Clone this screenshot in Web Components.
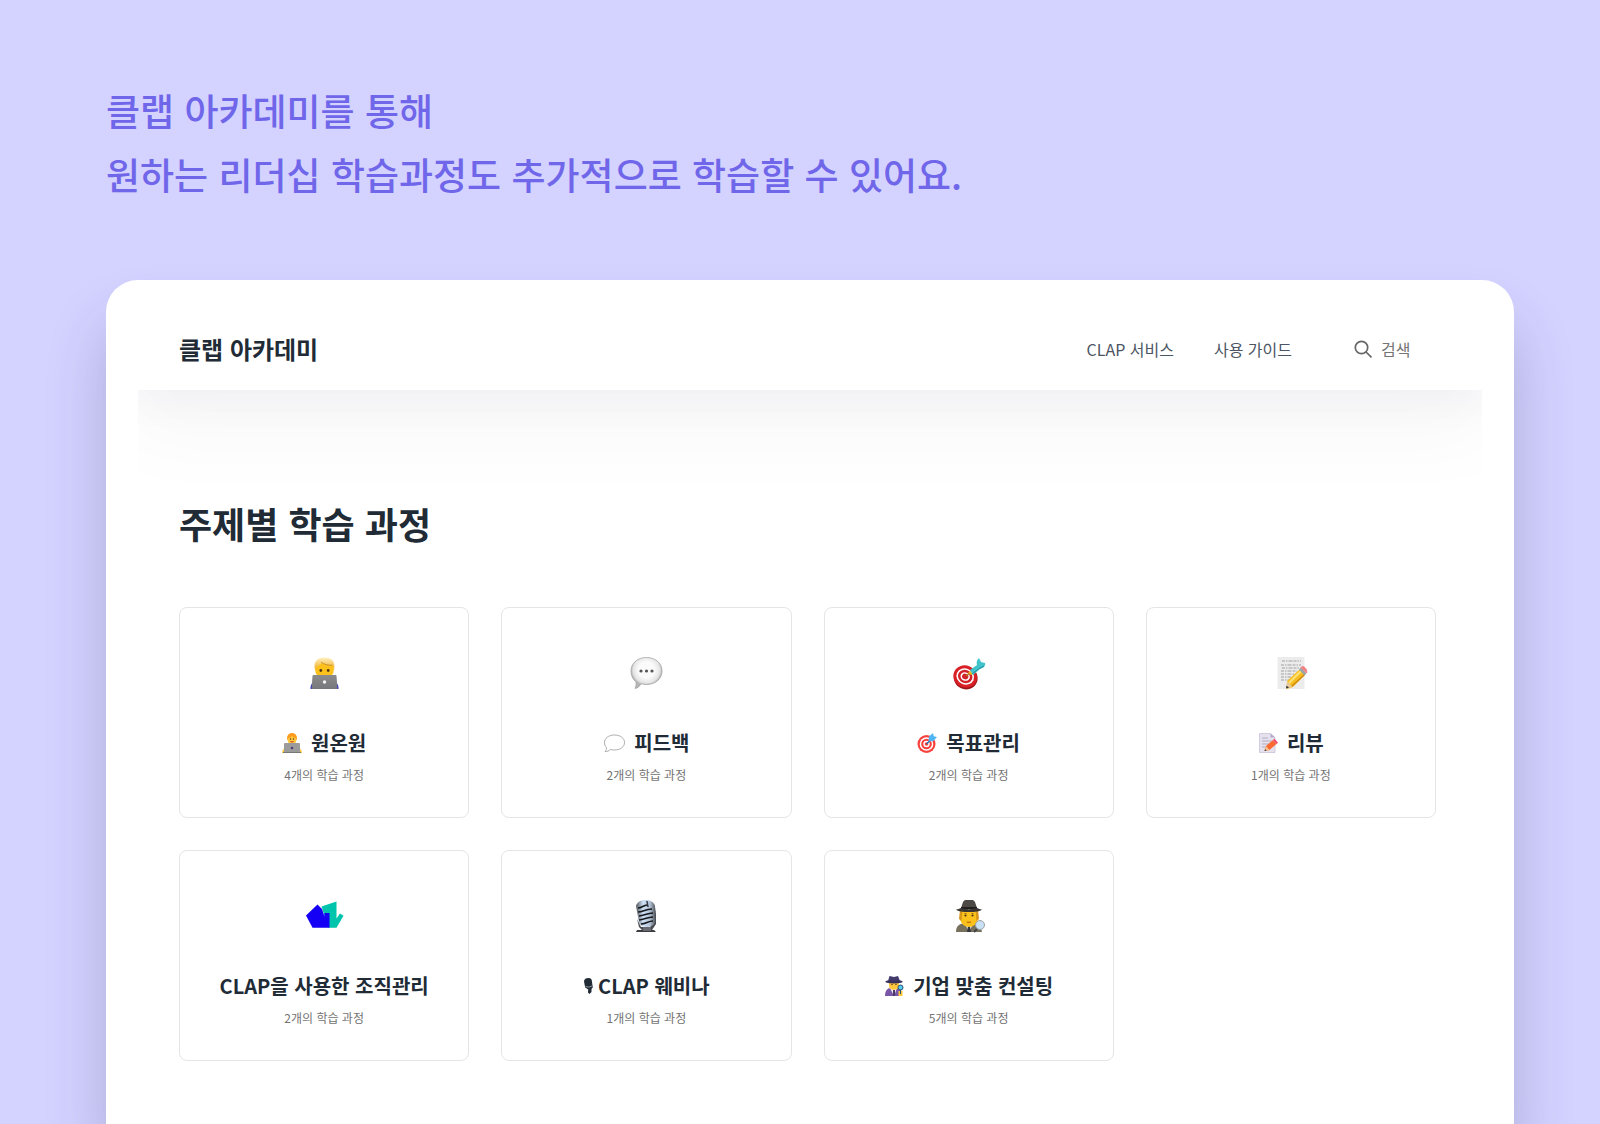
<!DOCTYPE html>
<html lang="ko">
<head>
<meta charset="UTF-8">
<meta name="viewport" content="width=device-width, initial-scale=1">
<title>클랩 아카데미</title>
<style>
    body {
        margin: 0;
        background-color: #d4d2ff;
        color: #212b36;
        font-family: "Noto Sans CJK KR", "Noto Sans", sans-serif;
    }
</style>
</head>
<body>
<promo-page>
    <span slot="line1">클랩 아카데미를 통해</span>
    <span slot="line2">원하는 리더십 학습과정도 추가적으로 학습할 수 있어요.</span>
    <academy-header>클랩 아카데미</academy-header>
    <topic-list>
        <span slot="heading">주제별 학습 과정</span>
        <topic-card icon="coder" emoji="coder-small" count="4">원온원</topic-card>
        <topic-card icon="bubble" emoji="bubble-small" count="2">피드백</topic-card>
        <topic-card icon="target" emoji="target-small" count="2">목표관리</topic-card>
        <topic-card icon="memo" emoji="memo-small" count="1">리뷰</topic-card>
        <topic-card icon="clap" count="2">CLAP을 사용한 조직관리</topic-card>
        <topic-card icon="mic" emoji="mic-small" count="1">CLAP 웨비나</topic-card>
        <topic-card icon="detective" emoji="detective-small" count="5">기업 맞춤 컨설팅</topic-card>
    </topic-list>
</promo-page>

<script>
// Icon drawings, keyed by name. Big ones use a 34 box, the small ones a 20 box.
const ICONS = {
    'coder': { box: '0 0 34 34', body: `
        <defs>
            <linearGradient id="hair" x2="0" y2="1"><stop stop-color="#fff0c0"/><stop offset="1" stop-color="#f0ac24"/></linearGradient>
            <linearGradient id="lap" x2="0" y2="1"><stop stop-color="#8b8b8d"/><stop offset="1" stop-color="#77787b"/></linearGradient>
        </defs>
        <path d="M3.500 33c0-4 1-6 4-7h20c3 1 4 3 4 7z" fill="#2b2fc4"/>
        <ellipse cx="17.500" cy="13" rx="9.500" ry="10.500" fill="#fcc21b"/>
        <path d="M8 14C6 6 10 1.500 17.500 1.500S29 6 27 14c-.6-2-.8-3-1.500-4.500-5 .5-8-.5-11-2.500-1 2.500-5 2.500-6.500 7z" fill="url(#hair)"/>
        <path d="M14 6c3 2.500 7 3.500 11.500 3.200" fill="none" stroke="#b97809" stroke-width=".7"/>
        <circle cx="13.800" cy="14.500" r="1.400" fill="#553711"/><circle cx="21.200" cy="14.500" r="1.400" fill="#553711"/>
        <path d="M6.500 19h22a1 1 0 0 1 1 1l1 13h-26l1-13a1 1 0 0 1 1-1z" fill="url(#lap)"/>
        <circle cx="17.500" cy="26" r="1.700" fill="#f4f4f4"/>` },
    'bubble': { box: '0 0 34 34', body: `
        <defs><radialGradient id="bub" cy=".4"><stop offset=".5" stop-color="#fbfbfb"/><stop offset=".85" stop-color="#e5e5e5"/><stop offset="1" stop-color="#b5b5b5"/></radialGradient></defs>
        <path d="M17.500 1.500c9 0 15.500 5.700 15.500 13.500s-6.500 13.500-15.500 13.500c-2 0-3.500-.2-5-.7-2 2.500-4 4.300-6.500 4.700 1-2 1.500-4.500.8-6.800C3.800 23.300 2 19.500 2 15 2 7.200 8.500 1.500 17.500 1.500z" fill="url(#bub)" stroke="#9c9c9c" stroke-width=".7"/>
        <circle cx="12" cy="15" r="1.600" fill="#555"/><circle cx="17.500" cy="15" r="1.600" fill="#555"/><circle cx="23" cy="15" r="1.600" fill="#555"/>` },
    'target': { box: '0 0 34 34', body: `
        <g transform="rotate(24 13 21)">
            <ellipse cx="14" cy="21.500" rx="12" ry="11.500" fill="#9c1519"/>
            <ellipse cx="13" cy="20.500" rx="12" ry="11" fill="#d92027"/>
            <ellipse cx="13" cy="20.500" rx="9" ry="8" fill="#fff"/>
            <ellipse cx="13" cy="20.500" rx="7.400" ry="6.500" fill="#d3232a"/>
            <ellipse cx="13" cy="20.500" rx="4.800" ry="4.200" fill="#fff"/>
            <ellipse cx="13" cy="20.500" rx="3.200" ry="2.800" fill="#d3232a"/>
        </g>
        <path d="M14 20l5-4" stroke="#a87a16" stroke-width="1.500"/>
        <path d="M16 17l2-2 3 3-2 1z" fill="#e9b320"/>
        <path d="M18 14l7-5c-1-3 0-5 2-7l2 4 4 1c1 2-1 5-5 6l-7 6z" fill="#42c3cc"/>
        <path d="M20 18l8-6 4-2" fill="none" stroke="#238f9b" stroke-width="1"/>` },
    'memo': { box: '0 0 34 34', body: `
        <path d="M3.500 1h27v32h-27z" fill="#ececec"/>
        <g stroke="#a0a0a0" stroke-width="1" stroke-dasharray="3 1 1.500 1 4 1">
            <path d="M8 5h19M7 9h20M8 12h17M7 15h16M7 18h13M7 21h10M7 24h9"/>
        </g>
        <path d="M13 25l13-12 5 6-12 12-6 2z" fill="#f8bf23"/>
        <path d="M15 27l13-13" stroke="#ffe27a" stroke-width="2"/>
        <path d="M17.500 30.500l13-12" stroke="#d08a12" stroke-width="1.500"/>
        <path d="M25 13.500l2-2 5.500 6-2 2z" fill="#9aa5aa"/>
        <path d="M27 11.500c2-3 7 2 5.500 5.500z" fill="#f08284" stroke="#f08284" stroke-width="1"/>
        <path d="M13 25l5.500 6L12 32.500z" fill="#e8c99a"/><path d="M12 32.500l.5-3 2.500 2.200z" fill="#333"/>` },
    'clap': { box: '0 0 40 34', body: `
        <path d="M17.500 7.500l15-5v17l3.500-5 3.500 2.200-7 12h-8z" fill="#00c4ac"/>
        <path d="M2 16.500l11.500-11L18 10l2.500 7.500V14h5v14.700h-17z" fill="#1500f5"/>` },
    'mic': { box: '0 0 34 34', body: `
        <defs><linearGradient id="chrome"><stop stop-color="#505359"/><stop offset=".35" stop-color="#cfe2f7"/><stop offset=".7" stop-color="#b3c2d6"/><stop offset="1" stop-color="#45484e"/></linearGradient></defs>
        <path d="M8 31h17l2 2H7z" fill="#3a3d42"/>
        <path d="M8 20l2 8 3 3h10l4-6V9l-2 14-4 5h-9z" fill="#494b50"/>
        <path d="M7 7c1-4 5-6 9-6 5 0 9 2 10 6l1 14c-1 4-3 6-8 7-5 0-8-1-9-5z" fill="url(#chrome)"/>
        <g fill="none" stroke="#17191c" stroke-width="1.600"><path d="M9 9c4 0 5-2.500 9-3M9 13c5 0 7-3 14-3M10 17c5 0 8-3 14-3M10 21c5 0 8-3 14-3M12 25c5 0 7-3 12-3"/></g>
        <path d="M18 2l1 6" stroke="#343a42" stroke-width="1.500"/>
        <path d="M14 28h8v4h-8z" fill="#686b72"/>` },
    'detective': { box: '0 0 34 34', body: `
        <path d="M4 33c0-6 3-8 8-9h11c4 1 6 4 7 9z" fill="#77705d"/>
        <path d="M13 25l4 8 4-8z" fill="#f5f5f5"/><path d="M16 27h2l1 6h-4z" fill="#34363d"/>
        <path d="M8 11h18v9c-1 5-5 8-9 8s-8-3-9-8z" fill="#fcc21b"/>
        <path d="M8 11h2.500L9.500 22 7 20zM26 11h-2.500l1 11 2.500-2z" fill="#d59619"/>
        <path d="M12.500 14.500h2M19.500 14.500h2" stroke="#8c5a0c" stroke-width=".8"/>
        <circle cx="13.500" cy="16.500" r="1.100" fill="#4e3213"/><circle cx="20.500" cy="16.500" r="1.100" fill="#4e3213"/>
        <path d="M15 23q2 .6 4 0" fill="none" stroke="#b2570f" stroke-width="1.100"/>
        <path d="M9 9l2-6c2-3 4-1.500 6-2 2 .5 4-1 6 2l2 6z" fill="#4b4845"/>
        <path d="M9 8h16v2H9z" fill="#211f1d"/>
        <path d="M4 10.500c3 0 4-1.500 5-1.500 5 1.500 11 1.500 16 0 1 0 2 1.500 5 1.500-2 2-7 2.500-13 2.500s-11-.5-13-2.500z" fill="#383532"/>
        <path d="M25 30l-3 3" stroke="#444" stroke-width="2"/>
        <circle cx="28" cy="26" r="4.500" fill="#c8e1f5" stroke="#9ca2a7" stroke-width="1"/>` },
    'coder-small': { box: '0 0 20 20', body: `
        <path d="M0 20c0-3 2-5 4-5h12c2 0 4 2 4 5z" fill="#ffc83d"/>
        <circle cx="10" cy="5" r="5" fill="#ff9a1f"/>
        <path d="M6 5c2 0 3-1 4-2 1 1 2 2 4 2v3c0 5-8 5-8 0z" fill="#ffc83d"/>
        <circle cx="8.500" cy="6" r=".7" fill="#5c3318"/><circle cx="11.500" cy="6" r=".7" fill="#5c3318"/>
        <path d="M8.500 8.500q1.500 1 3 0" fill="none" stroke="#d42b2b" stroke-width="1"/>
        <rect x="2" y="10" width="16" height="9.500" rx="1" fill="#9b9b9b"/>
        <path d="M1 19h18v1H1z" fill="#777"/>
        <circle cx="10" cy="15" r="1.300" fill="#553c78"/>` },
    'bubble-small': { box: '0 0 22 20', body: `
        <path d="M11.500 2c6 0 10 3.300 10 7.500S17.500 17 11.500 17c-1.500 0-3-.2-4-.6C6 18 4 18.700 2 18.500c1-1 1.700-2.200 1.500-3.700-1.300-1.400-2-3.200-2-5.300C1.500 5.300 5.500 2 11.500 2z" fill="#fff" stroke="#a3a3a3" stroke-width=".9"/>` },
    'target-small': { box: '0 0 20 20', body: `
        <circle cx="9.500" cy="11" r="9" fill="#f8403c"/><circle cx="9.500" cy="11" r="6.800" fill="#fff"/>
        <circle cx="9.500" cy="11" r="5.300" fill="#f8403c"/><circle cx="9.500" cy="11" r="3.200" fill="#fff"/><circle cx="9.500" cy="11" r="1.800" fill="#f8403c"/>
        <path d="M9.500 11l5-5" stroke="#1c6fb5" stroke-width="1.300"/>
        <path d="M11.500 8.500l.5-5L16 0l.8 3.200L20 4l-3.500 4z" fill="#50b5f5"/>` },
    'memo-small': { box: '0 0 20 20', body: `
        <path d="M1.500.5h11l4.500 4v15H1.500z" fill="#e6e1ee" stroke="#c5bbd4" stroke-width=".7"/>
        <path d="M12.500.5v4H17z" fill="#b5a8cb"/>
        <path d="M4 5h6M4 8h10M4 11h7M4 14h4" stroke="#b5aec1" stroke-width="1"/>
        <path d="M8 13l7-6 3.500 4-7 6-5 1z" fill="#f96a35"/>
        <path d="M15 7l1.500-1.200 3.500 4-1.500 1.200z" fill="#f2476b"/>
        <path d="M8 13l3.500 4-5 1z" fill="#f7c08a"/><path d="M6.500 18l.6-2 1.400 1.700z" fill="#333"/>` },
    'mic-small': { box: '0 0 10 20', body: `
        <path d="M1 5.500C1 3 3 2 5.500 2 8 2 9 3.500 9 6l.8 5.500L8.500 13v3l-2 2L5 16.500l.2-3-3-2z" fill="#212b36"/>
        <path d="M2.500 10.500q3.500 1.500 6.500-.5" fill="none" stroke="#fff" stroke-width=".5"/>` },
    'detective-small': { box: '0 0 20 20', body: `
        <path d="M1 20c0-5 2-8 6-8h6c4 0 5 3 5 8z" fill="#7a56a8"/>
        <path d="M6 12l4 8 3-8z" fill="#f3eef8"/><path d="M9 14h2v6H9z" fill="#4b3b62"/>
        <path d="M5 6h10v4c0 5-10 5-10 0z" fill="#ffc83d"/>
        <circle cx="8" cy="8.500" r=".7" fill="#45301a"/><circle cx="12" cy="8.500" r=".7" fill="#45301a"/>
        <path d="M4 5l1.500-5L10 1l4-1 2 5 2 1.500H2z" fill="#433b6b"/>
        <path d="M1 6q9 3 18 0l-2-1.500H3z" fill="#372f5c"/>
        <path d="M14.500 15h4v5h-4z" fill="#ffc83d"/>
        <circle cx="16.500" cy="11.500" r="2.500" fill="#55cdf0" stroke="#2b4c68" stroke-width="1"/>
        <path d="M16.500 14v4" stroke="#2b4c68" stroke-width="1"/>` }
};

// Builds the svg markup for one icon
const getIcon = (name, className) => {
    const icon = ICONS[name];
    if (!icon) return '';
    const [, , w, h] = icon.box.split(' ');
    return `<svg class="${className}" viewBox="${icon.box}" width="${w}" height="${h}" aria-hidden="true">${icon.body}</svg>`;
};

class PromoPage extends HTMLElement {
    constructor() {
        super();
        this.attachShadow({ mode: 'open' });
    }

    connectedCallback() {
        this.shadowRoot.innerHTML = `
            <style>
                :host {
                    display: flex;
                    flex-direction: column;
                    min-height: 100vh;
                    overflow: hidden;
                    box-sizing: border-box;
                    padding: 78px 86px 0 106px;
                }

                .intro {
                    margin: 0 0 74px;
                    color: #7066ea;
                    font-size: 37px;
                    font-weight: 500;
                    line-height: 64px;
                }

                .intro ::slotted(span) {
                    display: block;
                }

                .window {
                    flex: 1;
                    padding: 0 32px;
                    background-color: #fff;
                    border-radius: 32px 32px 0 0;
                    box-shadow: 0 44px 60px rgba(50, 50, 90, 0.24);
                }

                .viewport {
                    overflow: hidden;
                }
            </style>
            <h2 class="intro"><slot name="line1"></slot><slot name="line2"></slot></h2>
            <main class="window">
                <div class="viewport"><slot></slot></div>
            </main>
        `;
    }
}

class AcademyHeader extends HTMLElement {
    constructor() {
        super();
        this.attachShadow({ mode: 'open' });
    }

    connectedCallback() {
        this.shadowRoot.innerHTML = `
            <style>
                :host {
                    display: flex;
                    align-items: center;
                    justify-content: space-between;
                    padding: 28px 46px 0 41px;
                    height: 82px;
                    background-color: #fff;
                    /* soft fall-off under the bar */
                    box-shadow: 0 8px 36px 8px rgba(31, 41, 75, 0.03), 0 36px 80px 12px rgba(31, 41, 55, 0.03);
                }

                .logo {
                    color: #212b36;
                    font-size: 24px;
                    font-weight: 700;
                    line-height: 36px;
                    text-decoration: none;
                }

                nav {
                    display: flex;
                    align-items: center;
                    gap: 40px;
                    font-size: 16px;
                    line-height: 24px;
                }

                nav a {
                    color: #4b5563;
                    text-decoration: none;
                }

                .search {
                    display: flex;
                    align-items: center;
                    gap: 8px;
                    margin-left: 21px;
                }

                .search input {
                    width: 55px;
                    padding: 0;
                    border: 0;
                    outline: 0;
                    background: none;
                    color: #212b36;
                    font: inherit;
                }

                .search input::placeholder {
                    color: #757575;
                    opacity: 1;
                }
            </style>
            <a class="logo" href="#"><slot></slot></a>
            <nav>
                <a href="#service">CLAP 서비스</a>
                <a href="#guide">사용 가이드</a>
                <label class="search">
                    <svg width="20" height="20" viewBox="0 0 20 20" fill="none" stroke="#666" stroke-width="1.700" aria-hidden="true">
                        <circle cx="8.500" cy="8.500" r="6.200"/>
                        <path d="M13 13l5.500 5.300"/>
                    </svg>
                    <input type="text" placeholder="검색" aria-label="검색">
                </label>
            </nav>
        `;
    }
}

class TopicList extends HTMLElement {
    constructor() {
        super();
        this.attachShadow({ mode: 'open' });
    }

    connectedCallback() {
        this.shadowRoot.innerHTML = `
            <style>
                :host {
                    display: block;
                    padding: 105px 46px 62px 41px;
                }

                h1 {
                    position: relative;
                    margin: 0 0 56px;
                    font-size: 36px;
                    font-weight: 700;
                    line-height: 56px;
                }

                .grid {
                    display: grid;
                    grid-template-columns: repeat(4, 1fr);
                    gap: 32px;
                }
            </style>
            <h1><slot name="heading"></slot></h1>
            <div class="grid"><slot></slot></div>
        `;
    }
}

class TopicCard extends HTMLElement {
    constructor() {
        super();
        this.attachShadow({ mode: 'open' });
    }

    connectedCallback() {
        const icon = getIcon(this.getAttribute('icon'), 'icon');
        const emoji = getIcon(this.getAttribute('emoji'), 'emoji');
        const count = this.getAttribute('count');

        this.shadowRoot.innerHTML = `
            <style>
                :host {
                    display: block;
                }

                .card {
                    display: flex;
                    flex-direction: column;
                    align-items: center;
                    padding: 48px 16px 32px;
                    border: 1px solid #e5e5e5;
                    border-radius: 8px;
                    color: inherit;
                    text-decoration: none;
                }

                .icon {
                    display: block;
                    margin-bottom: 37px;
                }

                .title {
                    display: flex;
                    align-items: center;
                    gap: ${this.getAttribute('emoji') === 'mic-small' ? 5 : 9}px;
                    margin-bottom: 6px;
                    font-size: 20px;
                    font-weight: 700;
                    line-height: 32px;
                }

                .count {
                    color: #737373;
                    font-size: 12px;
                    line-height: 20px;
                }
            </style>
            <a class="card" href="#topic">
                ${icon}
                <span class="title">${emoji}<span><slot></slot></span></span>
                <span class="count">${count}개의 학습 과정</span>
            </a>
        `;
    }
}

customElements.define('promo-page', PromoPage);
customElements.define('academy-header', AcademyHeader);
customElements.define('topic-list', TopicList);
customElements.define('topic-card', TopicCard);
</script>
</body>
</html>
